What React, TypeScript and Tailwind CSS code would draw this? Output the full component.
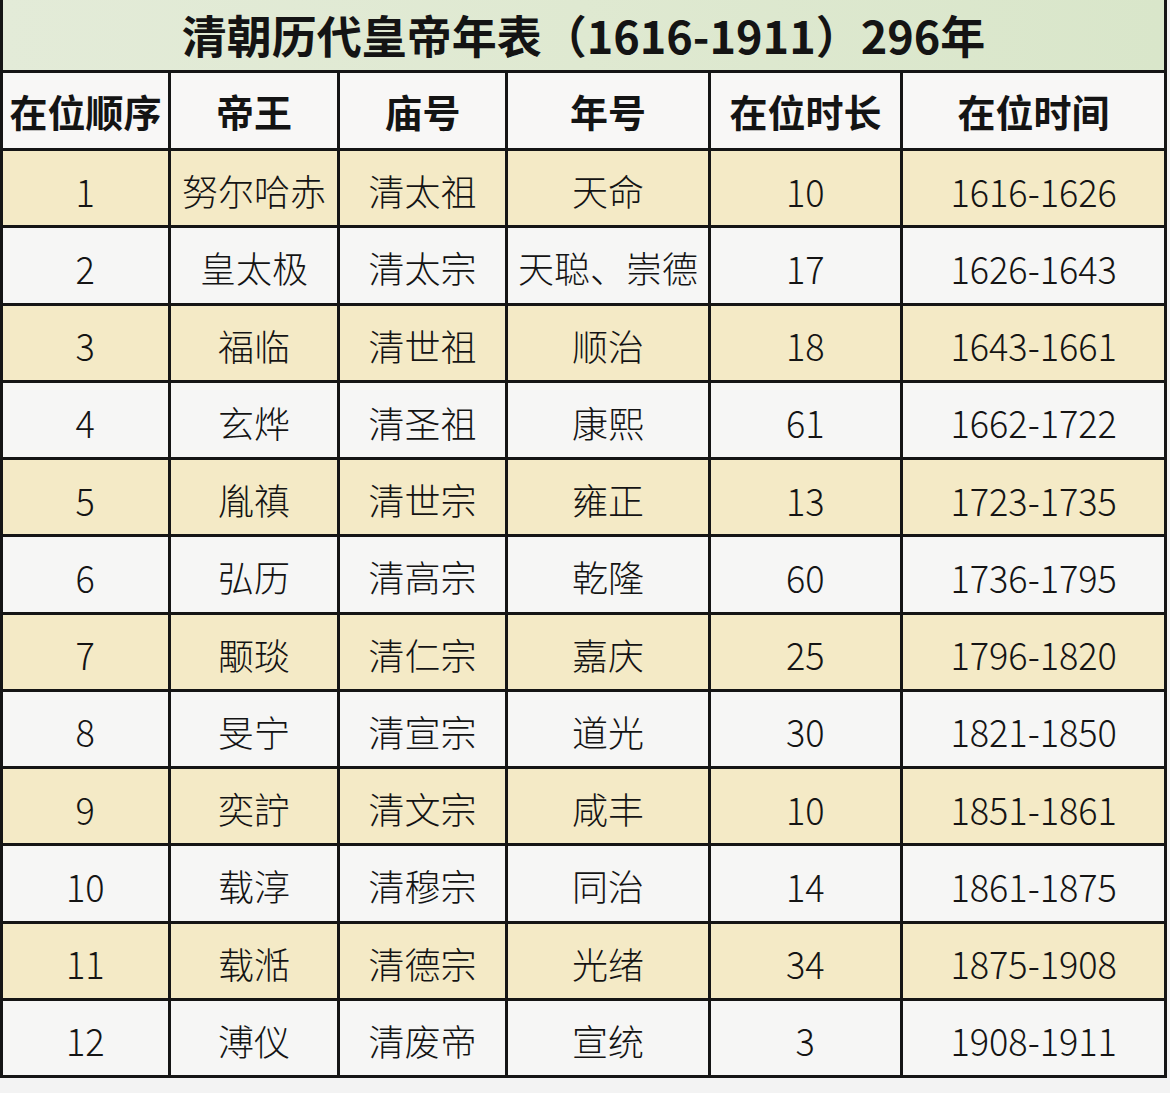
const headers = ["在位顺序", "帝王", "庙号", "年号", "在位时长", "在位时间"];

const emperors = [
  ["1", "努尔哈赤", "清太祖", "天命", "10", "1616-1626"],
  ["2", "皇太极", "清太宗", "天聪、崇德", "17", "1626-1643"],
  ["3", "福临", "清世祖", "顺治", "18", "1643-1661"],
  ["4", "玄烨", "清圣祖", "康熙", "61", "1662-1722"],
  ["5", "胤禛", "清世宗", "雍正", "13", "1723-1735"],
  ["6", "弘历", "清高宗", "乾隆", "60", "1736-1795"],
  ["7", "颙琰", "清仁宗", "嘉庆", "25", "1796-1820"],
  ["8", "旻宁", "清宣宗", "道光", "30", "1821-1850"],
  ["9", "奕詝", "清文宗", "咸丰", "10", "1851-1861"],
  ["10", "载淳", "清穆宗", "同治", "14", "1861-1875"],
  ["11", "载湉", "清德宗", "光绪", "34", "1875-1908"],
  ["12", "溥仪", "清废帝", "宣统", "3", "1908-1911"],
];

// columns holding plain numbers
const numCols = [0, 4, 5];

export default function App() {
  return (
    <div className="min-h-[1093px] w-[1170px] bg-[#f3f3f3] font-['Noto_Sans_CJK_SC',sans-serif] text-[#141414]">
      <div className="grid w-[1167px] grid-cols-[165px_166px_165px_200px_189px_261px] gap-[3px] bg-[#151515] px-[3px] pb-[3px]">
        <div className="col-span-6 flex h-[70px] items-center justify-center bg-gradient-to-r from-[#e3ebd8] via-[#dfe9d1] to-[#d9e6ca] text-[45px] font-bold">
          清朝历代皇帝年表（1616-1911）296年
        </div>
        {headers.map((h) => (
          <div
            key={h}
            className="flex h-[75px] items-center justify-center bg-[#f8f7f6] text-[38px] font-bold"
          >
            {h}
          </div>
        ))}
        {emperors.map((row, i) =>
          row.map((cell, j) => (
            <div
              key={`${i}-${j}`}
              className={`flex h-[74.25px] items-center justify-center whitespace-nowrap ${
                i % 2 === 0 ? "bg-[#f4eac6]" : "bg-[#f6f6f5]"
              }`}
            >
              {numCols.includes(j) ? (
                <span className="inline-block origin-center scale-x-[0.95] pt-1 text-[38px] font-light">
                  {cell}
                </span>
              ) : (
                <span className="pt-1 text-[36px] font-light">{cell}</span>
              )}
            </div>
          ))
        )}
      </div>
    </div>
  );
}
